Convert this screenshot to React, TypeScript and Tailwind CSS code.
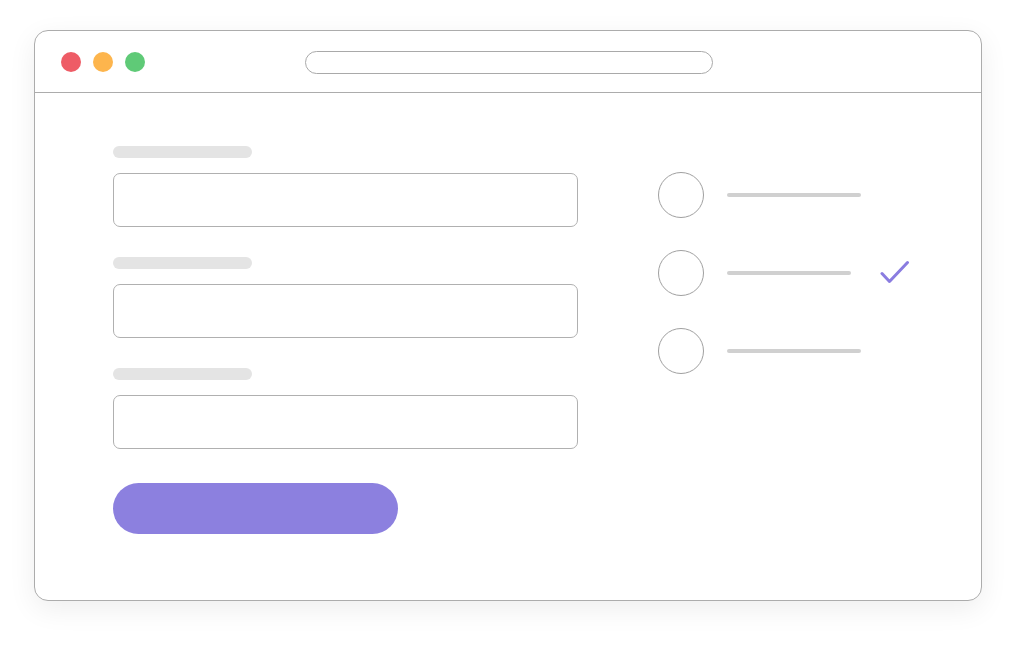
import React from 'react';

function Field({ labelWidth }: { labelWidth: number }) {
  return (
    <div className="flex flex-col">
      <div
        className="h-[12px] rounded-full bg-[#e4e4e4]"
        style={{ width: labelWidth }}
      />
      <div className="mt-[15px] h-[54px] w-[465px] rounded-[7px] border-[1.5px] border-[#b0b0b0] bg-white" />
    </div>
  );
}

function Option({ lineWidth, checked }: { lineWidth: number; checked?: boolean }) {
  return (
    <div className="flex h-[46px] items-center">
      <div className="h-[46px] w-[46px] rounded-full border-[1.5px] border-[#a0a0a0]" />
      <div
        className="ml-[23px] h-[4px] rounded-full bg-[#d0d0d0]"
        style={{ width: lineWidth }}
      />
      {checked && (
        <svg
          className="ml-[29px]"
          width="30"
          height="26"
          viewBox="0 0 30 26"
          fill="none"
        >
          <path
            d="M2 13.5 L9.5 21.5 L27.5 2.5"
            stroke="#8a7ce0"
            strokeWidth="3"
            strokeLinecap="round"
            strokeLinejoin="round"
          />
        </svg>
      )}
    </div>
  );
}

export default function App() {
  return (
    <div className="min-h-[646px] bg-white pl-[34px] pt-[30px]">
      <div className="h-[571px] w-[948px] overflow-hidden rounded-[14px] border-[1.5px] border-[#acacac] bg-white shadow-[0_8px_28px_rgba(0,0,0,0.07)]">
        <div className="flex h-[62px] items-center border-b-[1.5px] border-[#acacac] pl-[26px] pt-[1px]">
          <div className="flex gap-[12px]">
            <div className="h-[20px] w-[20px] rounded-full bg-[#ee5c66]" />
            <div className="h-[20px] w-[20px] rounded-full bg-[#fdb54d]" />
            <div className="h-[20px] w-[20px] rounded-full bg-[#5fca77]" />
          </div>
          <div className="ml-[160px] h-[23px] w-[408px] rounded-full border-[1.5px] border-[#a9a9a9]" />
        </div>
        <div className="flex pl-[78px] pt-[53px]">
          <div className="flex w-[465px] flex-col gap-[30px]">
            <Field labelWidth={139} />
            <Field labelWidth={139} />
            <Field labelWidth={139} />
            <div className="mt-[4px] h-[51px] w-[285px] rounded-full bg-[#8c80df]" />
          </div>
          <div className="ml-[80px] mt-[26px] flex flex-col gap-[32px]">
            <Option lineWidth={134} />
            <Option lineWidth={124} checked />
            <Option lineWidth={134} />
          </div>
        </div>
      </div>
    </div>
  );
}
